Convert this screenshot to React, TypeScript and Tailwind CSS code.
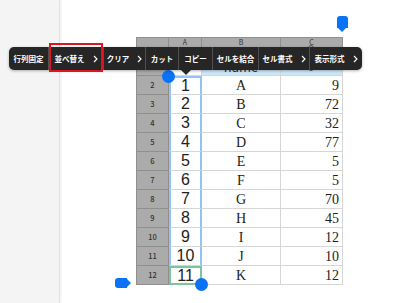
import React from 'react';

const rows = [
  { n: 2, b: '1', c: 'A', d: '9' },
  { n: 3, b: '2', c: 'B', d: '72' },
  { n: 4, b: '3', c: 'C', d: '32' },
  { n: 5, b: '4', c: 'D', d: '77' },
  { n: 6, b: '5', c: 'E', d: '5' },
  { n: 7, b: '6', c: 'F', d: '5' },
  { n: 8, b: '7', c: 'G', d: '70' },
  { n: 9, b: '8', c: 'H', d: '45' },
  { n: 10, b: '9', c: 'I', d: '12' },
  { n: 11, b: '10', c: 'J', d: '10' },
  { n: 12, b: '11', c: 'K', d: '12' },
];

const tools = [
  { label: '行列固定', w: 'w-[39px]', more: false },
  { label: '並べ替え', w: 'w-[55px]', more: true },
  { label: 'クリア', w: 'w-[42px]', more: true },
  { label: 'カット', w: 'w-[33px]', more: false },
  { label: 'コピー', w: 'w-[34px]', more: false },
  { label: 'セルを結合', w: 'w-[46px]', more: false },
  { label: 'セル書式', w: 'w-[51px]', more: true },
  { label: '表示形式', w: 'w-[53px]', more: true },
];

const Chevron = () => (
  <svg width="5" height="8" viewBox="0 0 5 8" className="shrink-0">
    <path d="M1 1l3 3-3 3" fill="none" stroke="white" strokeWidth="1.1" />
  </svg>
);

const App = () => {
  return (
    <div className="relative flex h-[303px] w-[400px] overflow-hidden bg-white" style={{ fontFamily: '"Noto Sans CJK JP", "Liberation Sans", sans-serif' }}>
      {/* left sidebar */}
      <div className="w-[60px] shrink-0 border-r border-[#e2e2e2] bg-[#f4f4f4] shadow-[1px_0_2px_rgba(0,0,0,0.08)]" />

      {/* sheet */}
      <div className="flex-1 pl-[76px] pt-[37px]">
        <div className="grid grid-cols-[33px_33px_79px_62px]">
          {/* column letters */}
          <div className="h-[20px] border border-[#8f8f8f] bg-[#ababab]" />
          <div className="flex h-[20px] justify-center border-y border-r border-[#8f8f8f] bg-[#ababab] text-[7px] leading-[9px] text-[#333]">A</div>
          <div className="flex h-[20px] justify-center border-y border-r border-[#8f8f8f] bg-[#ababab] text-[7px] leading-[9px] text-[#333]">B</div>
          <div className="flex h-[20px] justify-center border-y border-r border-[#8f8f8f] bg-[#ababab] text-[7px] leading-[9px] text-[#333]">C</div>

          {/* row 1 */}
          <div className="flex h-[19px] items-center justify-center border-x border-b border-[#8f8f8f] bg-[#ababab] text-[8px] text-[#333]">1</div>
          <div className="h-[19px] border-b border-r border-[#d6d6d6] bg-white" />
          <div className="flex h-[19px] items-end justify-center border-b border-r border-[#d6d6d6] bg-[#cde8fa] pb-[1px] text-[13px] leading-[14px] text-[#333]">name</div>
          <div className="relative h-[19px] border-b border-r border-[#d6d6d6] bg-[#cde8fa]">
            <div className="absolute left-[27px] top-[-12px] h-[26px] w-[6px] rounded-full border border-[#555]" />
          </div>

          {rows.map((r) => {
            const last = r.n === 12;
            return (
              <React.Fragment key={r.n}>
                <div className="flex h-[19px] items-center justify-center border-x border-b border-[#8f8f8f] bg-[#ababab] text-[7.5px] font-medium text-[#333]">{r.n}</div>
                <div
                  className={
                    last
                      ? 'flex h-[19px] items-center justify-center border-2 border-[#7cc4a0] bg-white text-[16px] text-[#222]'
                      : `flex h-[19px] items-center justify-center border-x-2 border-[#95c2f5] ${r.n === 2 ? 'border-t-2' : ''} border-b border-b-[#d6d6d6] bg-white text-[16px] text-[#222]`
                  }
                  style={{ fontFamily: '"Liberation Sans", sans-serif' }}
                >
                  {r.b}
                </div>
                <div className="flex h-[19px] items-center justify-center border-b border-r border-[#d6d6d6] text-[14px] text-[#222]" style={{ fontFamily: '"Liberation Serif", serif' }}>{r.c}</div>
                <div className="flex h-[19px] items-center justify-end border-b border-r border-[#d6d6d6] pr-[3px] text-[14px] text-[#222]" style={{ fontFamily: '"Liberation Serif", serif' }}>{r.d}</div>
              </React.Fragment>
            );
          })}
        </div>
      </div>

      {/* selection handles */}
      <div className="absolute left-[162px] top-[70px] h-[13px] w-[13px] rounded-full bg-[#0a72f5]" />
      <div className="absolute left-[195px] top-[278px] h-[13px] w-[13px] rounded-full bg-[#0a72f5]" />

      {/* scroll markers */}
      <div className="absolute left-[337px] top-[16px] h-[12px] w-[11px] rounded-t-[3px] bg-[#0a72f5]" />
      <div className="absolute left-[337px] top-[27px] h-0 w-0 border-x-[5.5px] border-t-[5px] border-x-transparent border-t-[#0a72f5]" />
      <div className="absolute left-[115px] top-[278px] h-[10px] w-[12px] rounded-l-[3px] bg-[#0a72f5]" />
      <div className="absolute left-[126px] top-[278px] h-0 w-0 border-y-[5px] border-l-[5px] border-y-transparent border-l-[#0a72f5]" />

      {/* context toolbar */}
      <div className="absolute left-[9px] top-[47px] flex h-[23px] overflow-hidden rounded-[5px] bg-[#262626] shadow-[0_1px_3px_rgba(0,0,0,0.3)]">
        {tools.map((t, i) => (
          <div
            key={t.label}
            className={`${t.w} flex h-full items-center justify-center gap-[8px] text-[7.5px] font-bold text-white ${i > 0 ? 'border-l border-[#505050]' : ''}`}
          >
            <span className="whitespace-nowrap">{t.label}</span>
            {t.more && <Chevron />}
          </div>
        ))}
      </div>
      <div className="absolute left-[180px] top-[69px] h-0 w-0 border-x-[6px] border-t-[6px] border-x-transparent border-t-[#262626]" />

      {/* highlight box */}
      <div className="absolute left-[49px] top-[43px] h-[29px] w-[54px] border-2 border-[#e0141e]" />
    </div>
  );
};

export default App;
